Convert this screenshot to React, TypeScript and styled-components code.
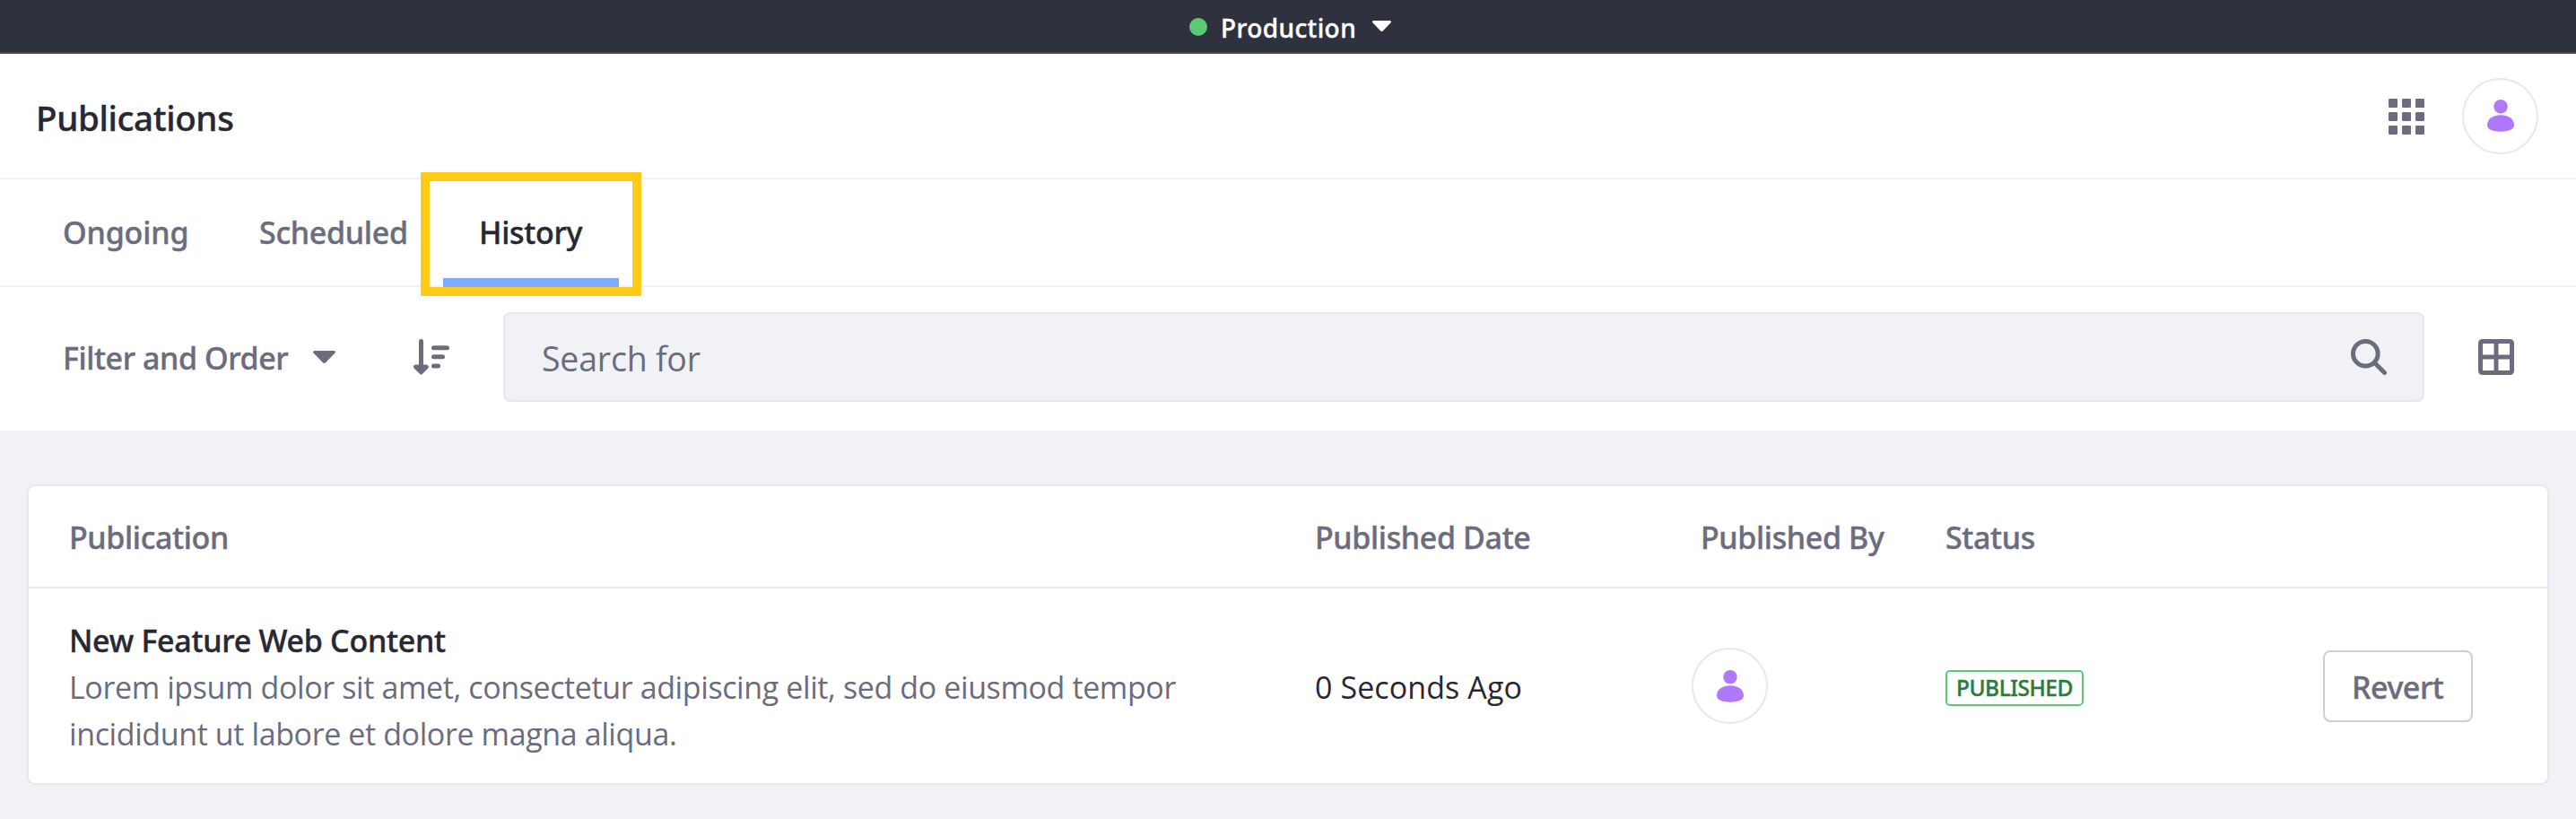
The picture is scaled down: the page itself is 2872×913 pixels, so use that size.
import React from 'react';
import styled, { createGlobalStyle, css } from 'styled-components';

const c = {
  dark: '#30313f',
  darkLine: '#45475b',
  ink: '#272833',
  muted: '#6b6c7e',
  line: '#e7e7ed',
  pale: '#f1f2f5',
  green: '#5aca75',
  purple: '#b078ff',
};

const GlobalStyle = createGlobalStyle`
  *, *::before, *::after { box-sizing: border-box; }
  body {
    margin: 0;
    background: ${c.pale};
    color: ${c.ink};
    font-family: "Open Sans", "Noto Sans", sans-serif;
    font-size: 34px;
    line-height: 52px;
  }
  button { background: none; border: 0; padding: 0; margin: 0; color: inherit; font: inherit; text-align: left; }
  svg { display: block; flex: none; }
`;

const semibold = css`
  font-family: "Noto Sans", sans-serif;
  font-weight: 500;
  -webkit-text-stroke: 0.4px currentColor;
`;

const Page = styled.div`
  min-height: 913px;
`;

const EnvironmentBar = styled.header`
  display: flex;
  align-items: center;
  height: 60px;
  padding-left: 1326px;
  background: ${c.dark};
  border-bottom: 2px solid ${c.darkLine};
  color: #fff;
`;

const StatusDot = styled.span`
  width: 20px;
  height: 20px;
  margin-top: 2px;
  border-radius: 50%;
  background: ${c.green};
`;

const EnvironmentName = styled.span`
  ${semibold}
  width: 169px;
  margin-left: 15px;
  padding-top: 4px;
  font-size: 28px;
  letter-spacing: 0.4px;
  line-height: 40px;
`;

const TitleBar = styled.div`
  display: flex;
  align-items: center;
  height: 140px;
  padding: 0 42px 0 40px;
  background: #fff;
  border-bottom: 2px solid ${c.pale};
`;

const Title = styled.h1`
  ${semibold}
  flex: 1;
  margin: 0;
  padding-top: 4px;
  font-size: 38.5px;
  letter-spacing: -0.35px;
`;

const AppsButton = styled.button`
  margin: 2px 42px 0 0;
`;

const Avatar = styled.span`
  display: flex;
  align-items: center;
  justify-content: center;
  width: 85px;
  height: 85px;
  border: 2px solid ${c.line};
  border-radius: 50%;
  background: #fff;
`;

const TabBar = styled.nav`
  display: flex;
  height: 120px;
  padding-left: 30px;
  background: #fff;
  border-bottom: 2px solid ${c.pale};
`;

const Tab = styled.button<{ $width: number; $spacing: number; $active?: boolean }>`
  ${semibold}
  position: relative;
  width: ${(p) => p.$width}px;
  height: 120px;
  padding: 0 0 2px 40px;
  color: ${(p) => (p.$active ? c.ink : c.muted)};
  letter-spacing: ${(p) => p.$spacing}px;
  ${(p) => p.$active && css`box-shadow: inset 0 -10px 0 #80acff;`}
`;

const Highlight = styled.span`
  position: absolute;
  top: -8px;
  left: -25px;
  width: 246px;
  height: 138px;
  border: 10px solid #ffca18;
`;

const Toolbar = styled.div`
  display: flex;
  align-items: center;
  height: 160px;
  padding: 0 69px 4px;
  background: #fff;
`;

const FilterButton = styled.button`
  ${semibold}
  display: flex;
  align-items: center;
  gap: 27px;
  width: 392px;
  letter-spacing: -0.43px;
`;

const FilterLabel = styled.span`
  width: 253px;
  padding: 2px 0 0 1px;
  color: ${c.muted};
  white-space: nowrap;
`;

const SearchField = styled.label`
  display: flex;
  align-items: center;
  justify-content: space-between;
  width: 2142px;
  height: 100px;
  margin: 0 60px;
  padding: 0 40px 0 41px;
  border: 2px solid ${c.line};
  border-radius: 8px;
  background: ${c.pale};
`;

const SearchText = styled.span`
  padding-top: 4px;
  color: ${c.muted};
  font-size: 37.5px;
  letter-spacing: -0.22px;
`;

const Card = styled.main`
  margin: 60px 30px 0 30px;
  border: 2px solid ${c.line};
  border-radius: 9px;
  background: #fff;
`;

const Row = styled.div`
  display: grid;
  grid-template-columns: 1389px 420px 283px 421px 1fr;
  align-items: center;
  height: 217px;
  padding-left: 45px;
`;

const HeadRow = styled(Row)`
  height: 114px;
  border-bottom: 2px solid ${c.line};
`;

const HeadCell = styled.span<{ $indent?: number }>`
  ${semibold}
  padding: 1px 0 0 ${(p) => p.$indent ?? 0}px;
  color: ${c.muted};
  letter-spacing: -0.37px;
`;

const Publication = styled.div`
  padding-top: 2px;
`;

const Name = styled.div`
  ${semibold}
  letter-spacing: -0.28px;
`;

const Description = styled.div`
  width: 1290px;
  color: ${c.muted};
  letter-spacing: -0.39px;
`;

const PublishedDate = styled.span`
  padding-top: 2px;
  letter-spacing: 0.09px;
`;

const Badge = styled.span`
  ${semibold}
  justify-self: start;
  width: 154px;
  height: 40px;
  margin-top: 4px;
  padding-left: 10px;
  border: 2px solid ${c.green};
  border-radius: 5px;
  color: #287d3c;
  font-size: 24.5px;
  letter-spacing: -0.47px;
  line-height: 36px;
`;

const RevertButton = styled.button`
  ${semibold}
  justify-self: start;
  width: 167px;
  height: 80px;
  padding: 2px 0 0 30px;
  border: 2px solid #cdced9;
  border-radius: 8px;
  color: ${c.muted};
  letter-spacing: -0.46px;
`;

const Caret = ({ width, height, color }: { width: number; height: number; color: string }) => (
  <svg width={width} height={height} viewBox="0 0 25 14" preserveAspectRatio="none" fill={color}>
    <path d="M1.6 0H23.4C24.8 0 25.4 1.6 24.5 2.6L14 13.3C13.1 14.2 11.9 14.2 11 13.3L.5 2.6C-.4 1.6.2 0 1.6 0Z" />
  </svg>
);

const UserIcon = () => (
  <svg width="30" height="36" viewBox="0 0 30 36" fill={c.purple}>
    <circle cx="15" cy="7.7" r="7.7" />
    <path d="M0 28.5C0 21.5 6.5 17.3 15 17.3S30 21.5 30 28.5C30 33.6 23 35.7 15 35.7S0 33.6 0 28.5Z" />
  </svg>
);

const AppsIcon = () => (
  <svg width="40" height="40" fill={c.muted}>
    {[0, 15, 30].map((y) => [0, 15, 30].map((x) => <rect key={`${x}-${y}`} x={x} y={y} width="10" height="10" rx="1.2" />))}
  </svg>
);

const SortIcon = () => (
  <svg width="40" height="40" fill={c.muted} stroke={c.muted} strokeWidth="5" strokeLinecap="round" strokeLinejoin="round">
    <path d="M8.5 2.5V35M2.5 31L8.5 36.8L14.3 31Z" />
    <path d="M22.5 9.8H37.5M22.5 19.8H32.5M22.5 29.9H27.5" />
  </svg>
);

const SearchIcon = () => (
  <svg width="40" height="40" fill="none" stroke={c.muted} strokeWidth="5" strokeLinecap="round">
    <circle cx="16.3" cy="16.3" r="13.8" />
    <path d="M27 27L37.5 37.5" />
  </svg>
);

const TableViewIcon = () => (
  <svg width="40" height="40" fill="none" stroke={c.muted} strokeWidth="5">
    <rect x="2.5" y="2.5" width="35" height="35" rx="2" />
    <path d="M20 3V37M3 20H37" />
  </svg>
);

export default function App() {
  return (
    <Page>
      <GlobalStyle />
      <EnvironmentBar>
        <StatusDot />
        <EnvironmentName>Production</EnvironmentName>
        <Caret width={21} height={12} color="#fff" />
      </EnvironmentBar>
      <TitleBar>
        <Title>Publications</Title>
        <AppsButton aria-label="Applications"><AppsIcon /></AppsButton>
        <Avatar><UserIcon /></Avatar>
      </TitleBar>
      <TabBar>
        <Tab $width={219} $spacing={-0.15}>Ongoing</Tab>
        <Tab $width={245} $spacing={-0.3}>Scheduled</Tab>
        <Tab $width={196} $spacing={-0.3} $active>
          History
          <Highlight />
        </Tab>
      </TabBar>
      <Toolbar>
        <FilterButton>
          <FilterLabel>Filter and Order</FilterLabel>
          <Caret width={25} height={14} color={c.muted} />
        </FilterButton>
        <SortIcon />
        <SearchField>
          <SearchText>Search for</SearchText>
          <SearchIcon />
        </SearchField>
        <TableViewIcon />
      </Toolbar>
      <Card>
        <HeadRow>
          <HeadCell>Publication</HeadCell>
          <HeadCell>Published Date</HeadCell>
          <HeadCell $indent={10}>Published By</HeadCell>
          <HeadCell>Status</HeadCell>
        </HeadRow>
        <Row>
          <Publication>
            <Name>New Feature Web Content</Name>
            <Description>
              Lorem ipsum dolor sit amet, consectetur adipiscing elit, sed do eiusmod tempor incididunt ut labore et dolore magna aliqua.
            </Description>
          </Publication>
          <PublishedDate>0 Seconds Ago</PublishedDate>
          <Avatar><UserIcon /></Avatar>
          <Badge>PUBLISHED</Badge>
          <RevertButton>Revert</RevertButton>
        </Row>
      </Card>
    </Page>
  );
}
